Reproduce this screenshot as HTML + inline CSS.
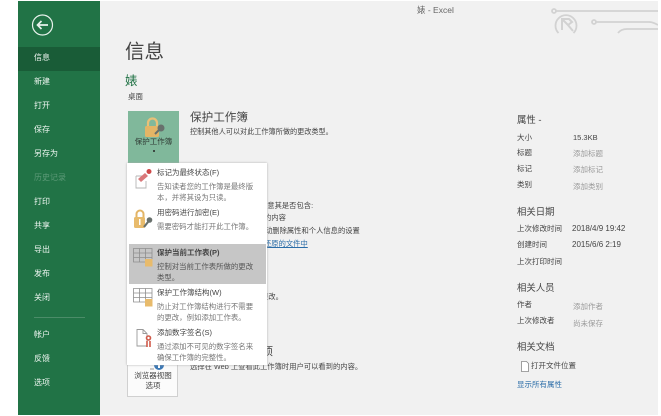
<!DOCTYPE html>
<html lang="zh"><head><meta charset="utf-8"><style>
html,body{margin:0;padding:0;background:#fff}
#r{position:relative;width:661px;height:416px;overflow:hidden;background:#fff;font-family:"Liberation Sans","Noto Sans CJK SC",sans-serif;color:#444;filter:blur(.35px)}
.a{position:absolute;white-space:nowrap}
.n{position:absolute;left:34px;color:#eef6f1;font-size:8px;line-height:14px;white-space:nowrap}
.s{font-size:7.5px;line-height:12px}
.m{font-size:7.3px;line-height:12px}
.h{font-size:9.4px;line-height:16px;color:#444}
.g{color:#9a9a9a}
.mt{position:absolute;left:28px;font-size:7.5px;line-height:12px;color:#444;white-space:nowrap}
.md{position:absolute;left:28px;font-size:7.4px;line-height:11px;color:#777;white-space:nowrap}
</style></head><body><div id="r">
<div class="a" style="left:100px;top:1px;width:558px;height:414px;background:#f1f1f1"></div>
<div class="a" style="left:18px;top:1px;width:82px;height:414px;background:#217346"></div>
<div class="a" style="left:18px;top:47px;width:82px;height:24px;background:#195c37"></div>
<svg class="a" style="left:31px;top:14px" width="24" height="24" viewBox="0 0 24 24" fill="none" stroke="#e8f2ec"><circle cx="11.500" cy="11" r="10" stroke-width="1.200"/><path d="M6.500 11H17M10.500 7L6.500 11L10.500 15" stroke-width="1.700"/></svg>
<div class="n" style="top:51px">信息</div><div class="n" style="top:75px">新建</div><div class="n" style="top:99px">打开</div><div class="n" style="top:123px">保存</div><div class="n" style="top:147px">另存为</div><div class="n" style="top:171px;color:#5d9a78">历史记录</div><div class="n" style="top:195px">打印</div><div class="n" style="top:219px">共享</div><div class="n" style="top:243px">导出</div><div class="n" style="top:267px">发布</div><div class="n" style="top:291px">关闭</div>
<div class="a" style="left:34px;top:317px;width:51px;height:1px;background:#4b8c68"></div>
<div class="n" style="top:328px">帐户</div><div class="n" style="top:352px">反馈</div><div class="n" style="top:376px">选项</div>

<div class="a" style="left:417px;top:4px;font-size:8.500px;line-height:12px;color:#666">婊 - Excel</div>
<svg class="a" style="left:545px;top:1px" width="113" height="36" viewBox="0 0 113 36" fill="none" stroke="#d2d2d2" stroke-width="1.800"><circle cx="9" cy="10" r="2"/><path d="M11 10H113M51 21H104Q108 21 113 24M73 32Q76 28 82 28H113"/><path d="M13.500 32A10.500 10.500 0 1 1 28.500 32"/><path d="M17 29V18H24L27 21L23 24L28 30M17 18L24 25" stroke-width="2"/><circle cx="49" cy="21" r="2"/></svg>

<div class="a" style="left:125px;top:39px;font-size:19.500px;line-height:26px;color:#444">信息</div>
<div class="a" style="left:125px;top:73px;font-size:12.500px;line-height:17px;color:#217346">婊</div>
<div class="a s" style="left:128px;top:91px">桌面</div>

<div class="a" style="left:128px;top:111px;width:51px;height:53px;background:#80b89b"></div>
<svg class="a" style="left:143px;top:117px" width="24" height="24" viewBox="0 0 24 24"><path d="M5 9V6a4.500 4.500 0 0 1 9 0V9" fill="none" stroke="#e8c078" stroke-width="2.200"/><rect x="2" y="9" width="14" height="11" rx="1.500" fill="#e3b566"/><circle cx="18" cy="11" r="3.500" fill="#68706c"/><path d="M16 13L12 17" stroke="#68706c" stroke-width="2"/></svg>
<div class="a" style="left:128px;top:136px;width:51px;text-align:center;font-size:7.500px;line-height:12px;color:#2f3a34">保护工作簿</div>
<div class="a" style="left:153px;top:150px;width:2px;height:2px;background:#3c4a42"></div>
<div class="a h" style="left:190px;top:110px;font-size:11.600px">保护工作簿</div>
<div class="a m" style="left:190px;top:126px;font-size:7.150px">控制其他人可以对此工作簿所做的更改类型。</div>

<div class="a m" style="left:260px;top:200px">注意其是否包含:</div>
<div class="a m" style="left:264px;top:212px">的内容</div>
<div class="a m" style="left:265px;top:225px">动删除属性和个人信息的设置</div>
<div class="a m" style="left:264px;top:238px;color:#2b6da8;text-decoration:underline">还原的文件中</div>
<div class="a m" style="left:261px;top:291px">更改。</div>
<div class="a" style="left:262px;top:344px;font-size:11px;line-height:16px;color:#444">项</div>
<div class="a m" style="left:190px;top:361px">选择在 Web 上查看此工作簿时用户可以看到的内容。</div>

<div class="a" style="left:127px;top:355px;width:49px;height:40px;background:#fbfbfb;border:1.500px solid #d0d0d0"></div>
<svg class="a" style="left:148px;top:362px" width="18" height="10" viewBox="0 0 18 10"><path d="M2 7H6" stroke="#999"/><circle cx="11" cy="3" r="5" fill="#3b78b5"/><rect x="10" y="1" width="2" height="5" fill="#fff"/></svg>
<div class="a" style="left:127px;top:371px;width:52px;text-align:center;font-size:7.500px;line-height:9.500px;color:#444">浏览器视图<br>选项</div>

<div class="a" style="left:127px;top:163px;width:140px;height:202px;background:#fff;box-shadow:0 0 2px #aaa"></div>
<div class="a" style="left:129px;top:244px;width:137px;height:40px;background:#c6c6c6"></div>

<div class="a" style="left:129px;top:165px;width:137px;height:200px">
<svg class="a" style="left:6px;top:3px" width="18" height="21" viewBox="0 0 18 21"><path d="M1 8H7M1 8V20H11V13" fill="#fff" stroke="#b5b5b5" stroke-width=".9"/><path d="M3 11L10 5L13 8L6 14Z" fill="#d9787a"/><circle cx="14" cy="3.500" r="2.500" fill="#cf4a4a"/></svg>
<div class="mt" style="top:2px">标记为最终状态(F)</div>
<div class="md" style="top:15.500px">告知读者您的工作簿是最终版</div><div class="md" style="top:26.500px">本，并将其设为只读。</div>
<svg class="a" style="left:5px;top:44px" width="19" height="20" viewBox="0 0 19 20"><path d="M2.500 9V5a3.500 3.500 0 0 1 7 0V9" fill="none" stroke="#e3b566" stroke-width="2"/><rect x="0" y="8" width="11" height="11" rx="1.500" fill="#e8bb6c"/><rect x="5" y="10" width="1.500" height="6" fill="#fff"/><circle cx="15.500" cy="11" r="2.800" fill="#68706c"/><path d="M14 13L10 18" stroke="#68706c" stroke-width="2.200"/></svg>
<div class="mt" style="top:42px">用密码进行加密(E)</div>
<div class="md" style="top:55.500px">需要密码才能打开此工作簿。</div>
<svg class="a" style="left:4px;top:83px" width="20" height="20" viewBox="0 0 20 20" fill="none" stroke="#8e8e8e" stroke-width=".8"><path d="M.5.500H19V14H.5ZM.5 5H19M.5 9.500H19M6.500.500V14M12.500.500V14"/><rect x="12" y="11" width="7.500" height="7.500" fill="#e8bb6c" stroke="none"/></svg>
<div class="mt" style="top:82px;font-weight:700">保护当前工作表(P)</div>
<div class="md" style="top:95.500px;color:#555">控制对当前工作表所做的更改</div><div class="md" style="top:106.500px;color:#555">类型。</div>
<svg class="a" style="left:4px;top:123px" width="20" height="20" viewBox="0 0 20 20" fill="none" stroke="#8e8e8e" stroke-width=".8"><path d="M.5.500H19V14H.5ZM.5 5H19M.5 9.500H19M6.500.500V14M12.500.500V14"/><rect x="12" y="11" width="7.500" height="7.500" fill="#e8bb6c" stroke="none"/></svg>
<div class="mt" style="top:122px">保护工作簿结构(W)</div>
<div class="md" style="top:135.500px">防止对工作簿结构进行不需要</div><div class="md" style="top:146.500px">的更改，例如添加工作表。</div>
<svg class="a" style="left:7px;top:164px" width="17" height="19" viewBox="0 0 17 19" fill="none"><path d="M1 .5H7L11 4.500V17H1Z" fill="#fff" stroke="#9a9a9a" stroke-width=".9"/><path d="M7 .5V4.500H11" stroke="#9a9a9a" stroke-width=".9"/><circle cx="12.500" cy="9" r="2" stroke="#d05a4a" stroke-width="1.600"/><path d="M11 12V18M14 12V18" stroke="#d05a4a" stroke-width="1.600"/></svg>
<div class="mt" style="top:162px">添加数字签名(S)</div>
<div class="md" style="top:175.500px">通过添加不可见的数字签名来</div><div class="md" style="top:186.500px">确保工作簿的完整性。</div>
</div>

<div class="a h" style="left:517px;top:112px">属性 -</div>
<div class="a s" style="left:517px;top:132px">大小</div><div class="a s" style="left:573px;top:132px">15.3KB</div>
<div class="a s" style="left:517px;top:147px">标题</div><div class="a s g" style="left:573px;top:148px">添加标题</div>
<div class="a s" style="left:517px;top:163px">标记</div><div class="a s g" style="left:573px;top:164px">添加标记</div>
<div class="a s" style="left:517px;top:179px">类别</div><div class="a s g" style="left:573px;top:181px">添加类别</div>
<div class="a h" style="left:517px;top:204px">相关日期</div>
<div class="a s" style="left:517px;top:223px">上次修改时间</div><div class="a s" style="left:572px;top:223px;font-size:8px">2018/4/9 19:42</div>
<div class="a s" style="left:517px;top:239px">创建时间</div><div class="a s" style="left:572px;top:239px;font-size:8px">2015/6/6 2:19</div>
<div class="a s" style="left:517px;top:256px">上次打印时间</div>
<div class="a h" style="left:517px;top:280px">相关人员</div>
<div class="a s" style="left:517px;top:299px">作者</div><div class="a s g" style="left:573px;top:301px">添加作者</div>
<div class="a s" style="left:517px;top:315px">上次修改者</div><div class="a s g" style="left:573px;top:318px">尚未保存</div>
<div class="a h" style="left:517px;top:339px">相关文档</div>
<svg class="a" style="left:521px;top:361px" width="8" height="11" viewBox="0 0 8 11"><path d="M.5.500H5.500L7.500 2.500V10.500H.5Z" fill="#fff" stroke="#888" stroke-width=".8"/></svg>
<div class="a s" style="left:531px;top:360px">打开文件位置</div>
<div class="a s" style="left:517px;top:379px;color:#2b6da8">显示所有属性</div>
</div></body></html>
